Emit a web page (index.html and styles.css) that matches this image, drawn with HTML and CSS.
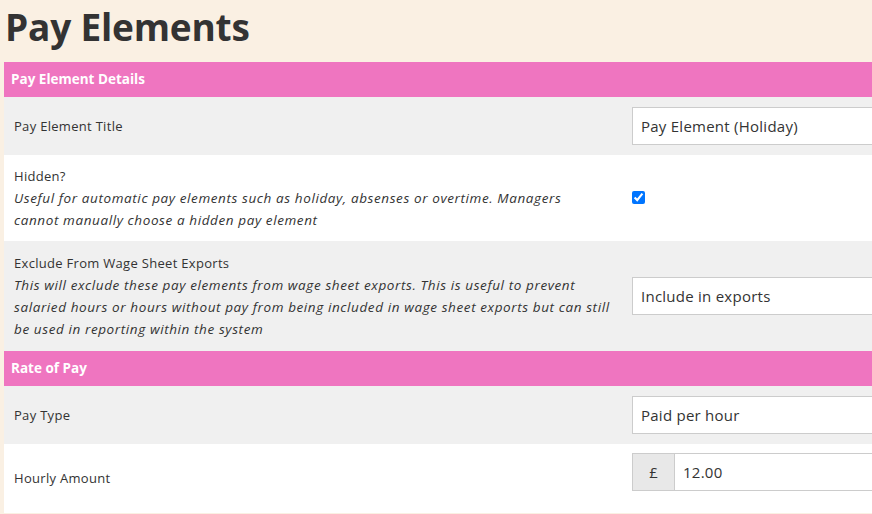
FILE: index.html
```html
<!DOCTYPE html>
<html lang="en">
<head>
  <meta charset="UTF-8">
  <title>Pay Elements</title>
  <link rel="stylesheet" href="styles.css">
</head>
<body>
  <div id="pay-elements-page">
    <h1>Pay Elements</h1>

    <!-- Details -->
    <div class="section-header">Pay Element Details</div>
    <div class="form-row shaded">
      <div class="form-label">Pay Element Title</div>
      <div class="form-field">
        <input type="text" class="form-input" value="Pay Element (Holiday)">
      </div>
    </div>
    <div class="form-row">
      <div class="form-label">
        Hidden?
        <div class="hint narrow">Useful for automatic pay elements such as holiday, absenses or overtime. Managers cannot manually choose a hidden pay element</div>
      </div>
      <div class="form-field">
        <input type="checkbox" class="form-check" checked>
      </div>
    </div>
    <div class="form-row shaded roomy">
      <div class="form-label">
        Exclude From Wage Sheet Exports
        <div class="hint">This will exclude these pay elements from wage sheet exports. This is useful to prevent salaried hours or hours without pay from being included in wage sheet exports but can still be used in reporting within the system</div>
      </div>
      <div class="form-field">
        <select class="form-input">
          <option>Include in exports</option>
          <option>Exclude from exports</option>
        </select>
      </div>
    </div>

    <!-- Rate -->
    <div class="section-header">Rate of Pay</div>
    <div class="form-row shaded">
      <div class="form-label">Pay Type</div>
      <div class="form-field">
        <select class="form-input">
          <option>Paid per hour</option>
          <option>Fixed amount</option>
        </select>
      </div>
    </div>
    <div class="form-row tall">
      <div class="form-label">Hourly Amount</div>
      <div class="form-field">
        <div class="input-group">
          <span class="addon">£</span>
          <input type="text" class="form-input" value="12.00">
        </div>
      </div>
    </div>
  </div>
</body>
</html>
```

FILE: styles.css
```css
/* General Styles */
html, body {
  overflow: hidden;
}

body {
  margin: 0;
  font-family: 'Open Sans', sans-serif;
  background: #faf0e3;
  color: #333;
}

#pay-elements-page {
  width: 1100px;
  padding-left: 4px;
}

#pay-elements-page h1 {
  margin: 0;
  padding: 3px 0 11px 1px;
  font-size: 37px;
  line-height: 48px;
  font-weight: 700;
  color: #333;
  letter-spacing: -0.2px;
}

.section-header {
  background: #ef75c0;
  color: #fff;
  font-size: 13.5px;
  font-weight: 700;
  height: 35px;
  line-height: 34px;
  padding-left: 7px;
}

.form-row {
  display: grid;
  grid-template-columns: 618px 1fr;
  align-items: center;
  background: #fff;
  padding: 10px;
  min-height: 38px;
}

.form-row.shaded {
  background: #f0f0f0;
}

.form-row.roomy {
  padding: 11px 10px;
}

.form-row.tall {
  min-height: 50px;
  padding-top: 9px;
}

.form-label {
  font-size: 13px;
  line-height: 22px;
  letter-spacing: 0.3px;
  padding-right: 6px;
}

.form-label .hint {
  font-style: italic;
  font-size: 13.5px;
  line-height: 22px;
  letter-spacing: 0.6px;
}

.form-label .hint.narrow {
  max-width: 590px;
}

.form-input {
  box-sizing: border-box;
  width: 100%;
  height: 38px;
  border: 1px solid #ccc;
  background: #fff;
  padding: 0 8px;
  font-family: 'Open Sans', sans-serif;
  font-size: 15px;
  letter-spacing: 0.25px;
  color: #333;
  border-radius: 0;
  outline: none;
  appearance: none;
}

.form-check {
  margin: 0;
  width: 13px;
  height: 13px;
}

.form-row.tall .form-field {
  align-self: start;
}

.input-group {
  display: flex;
}

.input-group .addon {
  flex-shrink: 0;
  width: 42px;
  height: 38px;
  box-sizing: border-box;
  border: 1px solid #ccc;
  border-right: none;
  background: #e8e8e8;
  display: flex;
  align-items: center;
  justify-content: center;
  font-size: 15px;
}

.input-group .form-input {
  flex: 1;
  min-width: 0;
}
```
